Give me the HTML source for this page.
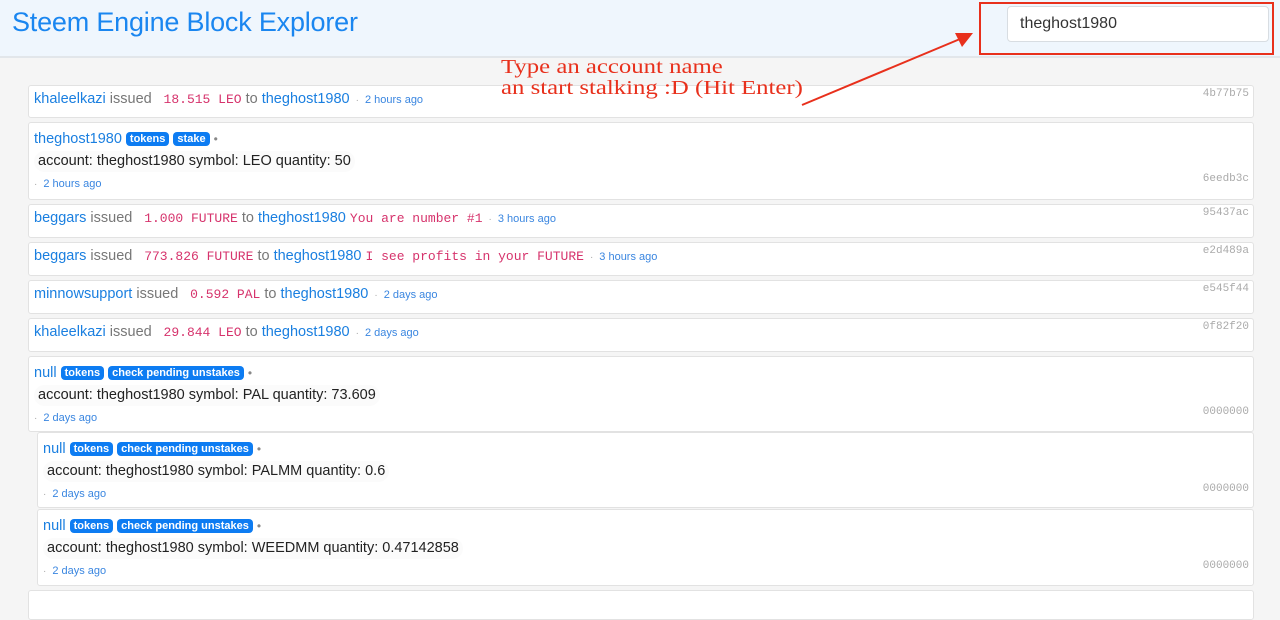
<!DOCTYPE html>
<html><head><meta charset="utf-8"><style>
*{box-sizing:border-box;margin:0;padding:0}
body{width:1280px;height:594px;overflow:hidden;background:#f5f5f5;font-family:"Liberation Sans",sans-serif;position:relative}
.hdr{position:absolute;left:0;top:0;width:1280px;height:58px;background:#eff6fd;border-bottom:2px solid #e2e6ea}
.title{position:absolute;left:12px;top:7px;font-size:27px;color:#1a86f0;letter-spacing:-0.2px}
.box{position:absolute;left:979px;top:2px;width:295px;height:53px;border:2px solid #e8301c}
.inp{position:absolute;left:1007px;top:6px;width:262px;height:36px;background:#fff;border:1px solid #d8dde2;border-radius:4px;font-size:16px;color:#333;padding:8px 12px}
.ann{position:absolute;left:501px;top:57px;font-family:"Liberation Serif",serif;font-size:19.5px;line-height:21px;color:#e8301c;z-index:5;transform:scaleX(1.27);transform-origin:0 0;white-space:nowrap}
.card{position:absolute;left:28px;width:1226px;background:#fff;border:1px solid #e2e2e2;border-radius:3px;padding:5px 5px;font-size:14.5px;color:#777}
.card.n{left:37px;width:1217px}
a{color:#1a7fe0;text-decoration:none}
.m{font-family:"Liberation Mono",monospace;color:#d6336c;font-size:13px}
.t{color:#3a86e0;font-size:11px}
.d{color:#aaa;font-size:10px;margin:0 6px}
.h{position:absolute;right:4px;font-family:"Liberation Mono",monospace;font-size:11px;color:#aaa}
.b{display:inline-block;background:#0d7cf2;color:#fff;font-size:11px;line-height:14px;font-weight:bold;padding:0 4px;border-radius:4px;vertical-align:1px}
.p{display:inline-block;background:#fbfbfb;border-radius:12px;padding:1px 4px;color:#222;font-size:14.5px;line-height:19px}
.dot{color:#888;font-size:12px}
.ml{padding-top:5px;line-height:22px}
</style></head><body>
<div class="hdr"><div class="title">Steem Engine Block Explorer</div></div>
<div class="box"></div>
<div class="inp">theghost1980</div>

<div class="card" style="top:85px;height:33px"><a>khaleelkazi</a> issued <span class="m">&nbsp;18.515 LEO</span> to <a>theghost1980</a><span class="d">·</span><span class="t">2 hours ago</span><span class="h" style="top:2px">4b77b75</span></div>
<div class="card ml" style="top:122px;height:78px"><a>theghost1980</a> <span class="b">tokens</span> <span class="b">stake</span> <span class="dot">•</span><br><span class="p">account: theghost1980 symbol: LEO quantity: 50</span><br><span class="d" style="margin-left:0">·</span><span class="t">2 hours ago</span><span class="h" style="top:45px">6eedb3c</span></div>
<div class="card" style="top:204px;height:34px"><a>beggars</a> issued <span class="m">&nbsp;1.000 FUTURE</span> to <a>theghost1980</a> <span class="m">You are number #1</span><span class="d">·</span><span class="t">3 hours ago</span><span class="h" style="top:2px">95437ac</span></div>
<div class="card" style="top:242px;height:34px"><a>beggars</a> issued <span class="m">&nbsp;773.826 FUTURE</span> to <a>theghost1980</a> <span class="m">I see profits in your FUTURE</span><span class="d">·</span><span class="t">3 hours ago</span><span class="h" style="top:2px">e2d489a</span></div>
<div class="card" style="top:280px;height:34px"><a>minnowsupport</a> issued <span class="m">&nbsp;0.592 PAL</span> to <a>theghost1980</a><span class="d">·</span><span class="t">2 days ago</span><span class="h" style="top:2px">e545f44</span></div>
<div class="card" style="top:318px;height:34px"><a>khaleelkazi</a> issued <span class="m">&nbsp;29.844 LEO</span> to <a>theghost1980</a><span class="d">·</span><span class="t">2 days ago</span><span class="h" style="top:2px">0f82f20</span></div>
<div class="card ml" style="top:356px;height:76px"><a>null</a> <span class="b">tokens</span> <span class="b">check pending unstakes</span> <span class="dot">•</span><br><span class="p">account: theghost1980 symbol: PAL quantity: 73.609</span><br><span class="d" style="margin-left:0">·</span><span class="t">2 days ago</span><span class="h" style="top:44px">0000000</span></div>
<div class="card n ml" style="top:432px;height:76px"><a>null</a> <span class="b">tokens</span> <span class="b">check pending unstakes</span> <span class="dot">•</span><br><span class="p">account: theghost1980 symbol: PALMM quantity: 0.6</span><br><span class="d" style="margin-left:0">·</span><span class="t">2 days ago</span><span class="h" style="top:45px">0000000</span></div>
<div class="card n ml" style="top:509px;height:77px"><a>null</a> <span class="b">tokens</span> <span class="b">check pending unstakes</span> <span class="dot">•</span><br><span class="p">account: theghost1980 symbol: WEEDMM quantity: 0.47142858</span><br><span class="d" style="margin-left:0">·</span><span class="t">2 days ago</span><span class="h" style="top:45px">0000000</span></div>
<div class="card" style="top:590px;height:30px"></div>

<div class="ann">Type an account name<br>an start stalking :D (Hit Enter)</div>
<svg style="position:absolute;left:0;top:0;z-index:6" width="1280" height="594"><line x1="802" y1="105" x2="960" y2="39" stroke="#e8301c" stroke-width="2"/><polygon points="973,33 955,33 962,47" fill="#e8301c"/></svg>
</body></html>
